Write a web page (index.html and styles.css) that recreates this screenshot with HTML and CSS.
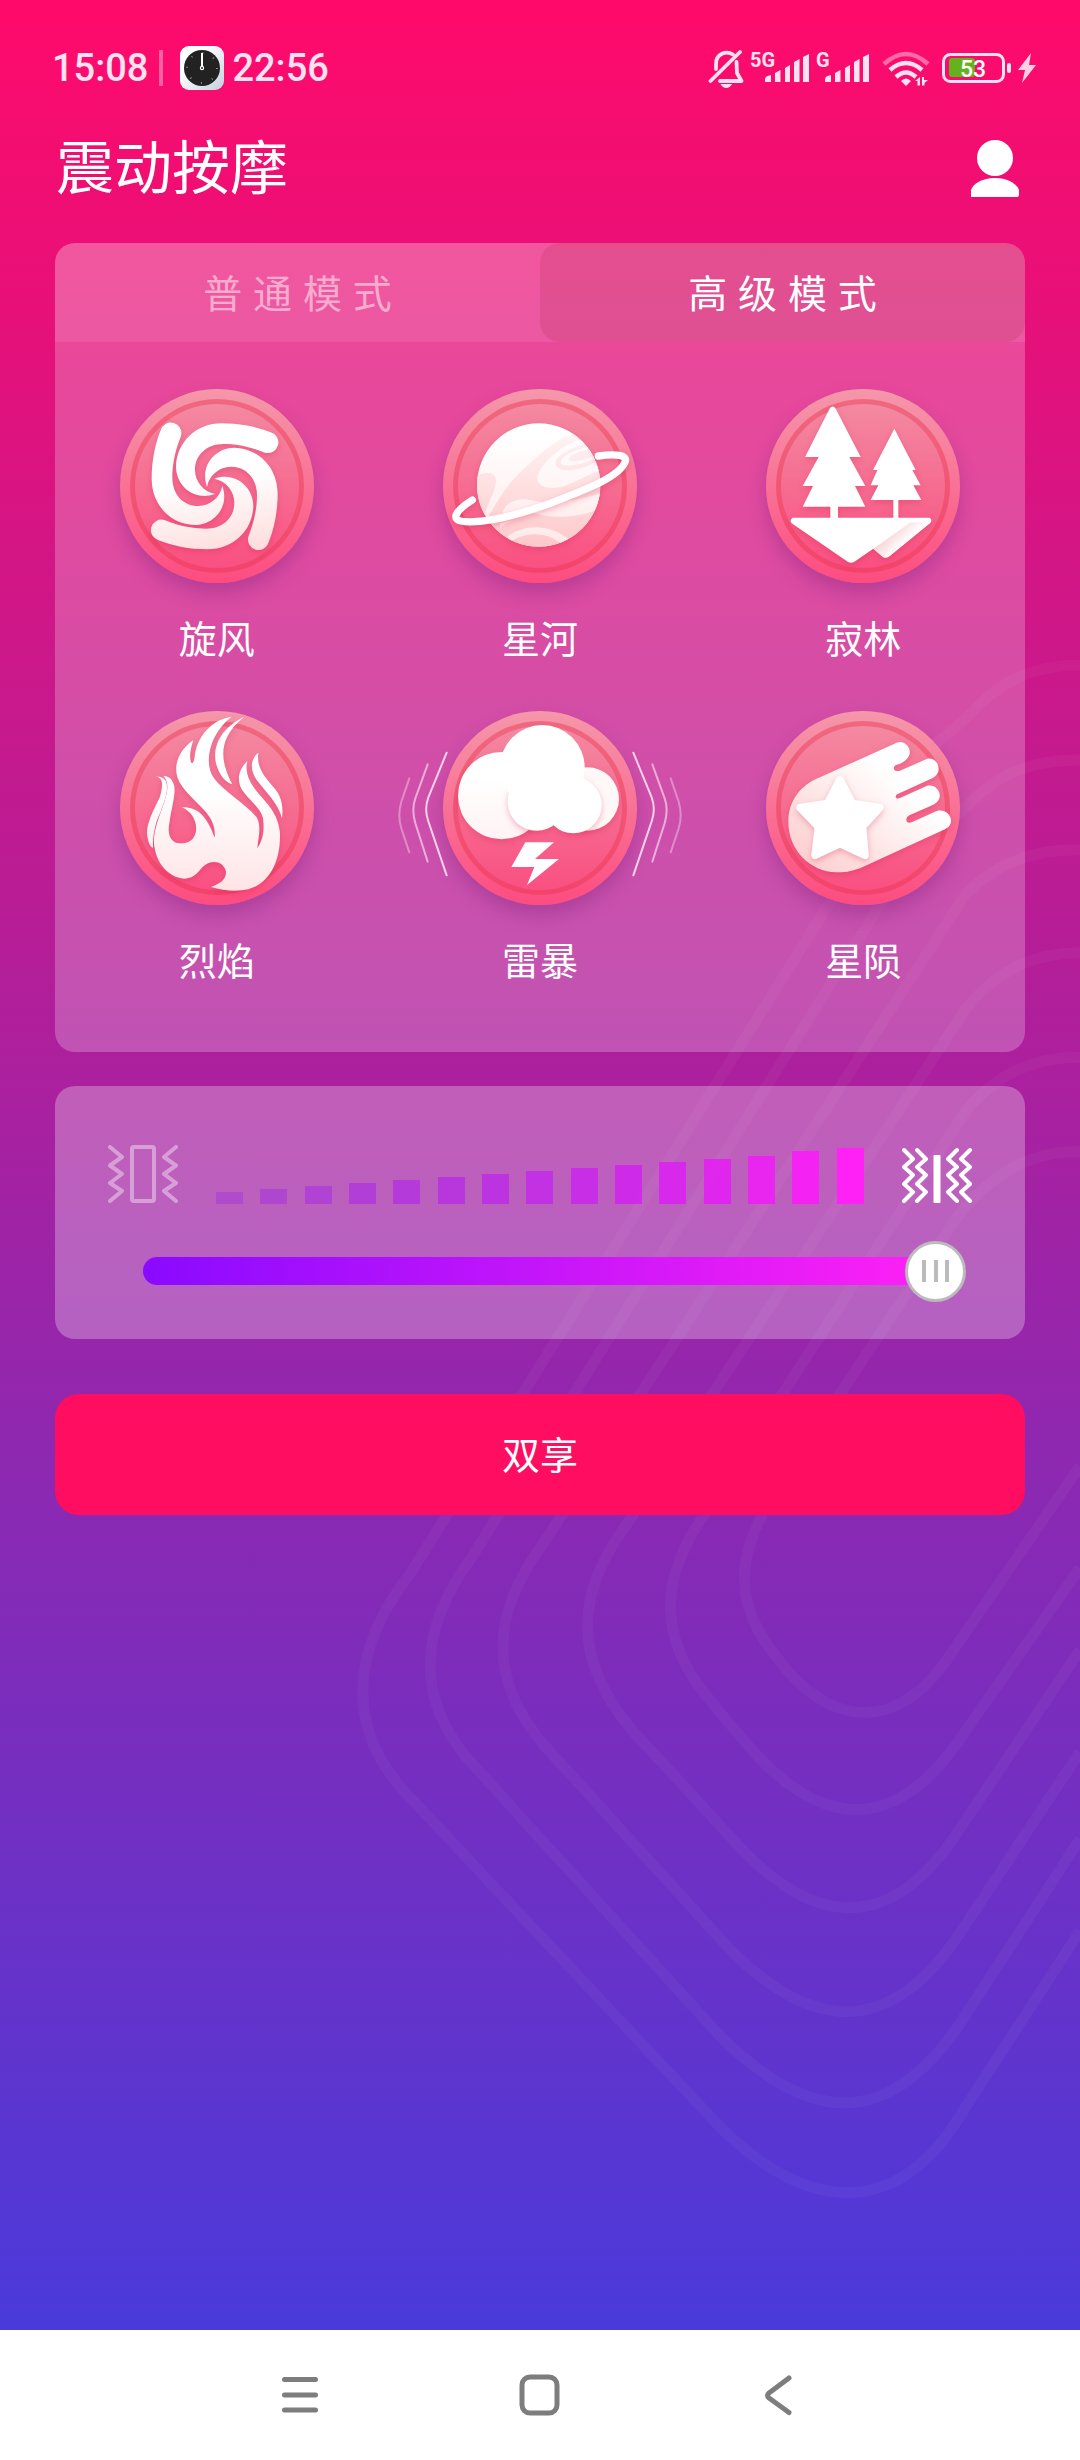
FILE: index.html
```html
<!DOCTYPE html>
<html lang="zh-CN">
<head>
<meta charset="utf-8">
<meta name="viewport" content="width=device-width, initial-scale=1">
<title>震动按摩</title>
<link rel="stylesheet" href="styles.css">
</head>
<body>
<div class="app">
  <svg class="backdrop" viewBox="0 0 1080 2330" preserveAspectRatio="xMaxYMax slice" aria-hidden="true">
    <path d="M1110 668Q1030 655 980 704Q950 735 925 750L410 1574C350 1650 346 1728 405 1792L720 2127C810 2215 900 2220 965 2108L1080 1931"/>
    <path d="M1110 763Q1025 750 975 798Q950 825 930 825L472 1557C418 1630 416 1696 467 1758L720 2036C810 2125 890 2132 965 2016L1080 1839"/>
    <path d="M1110 853Q1020 838 965 895L543 1544C490 1615 489 1680 543 1744L725 1944C810 2033 890 2040 962 1930L1080 1752"/>
    <path d="M1110 956Q1020 940 965 1010L627 1524C574 1595 573 1660 632 1730L738 1845C815 1928 890 1932 955 1836L1080 1650"/>
    <path d="M1110 1060Q1020 1045 965 1112L706 1512C658 1580 657 1640 713 1704L752 1750C822 1828 892 1832 955 1746L1080 1568"/>
    <path d="M1110 1156Q1020 1135 955 1220L770 1500C735 1560 735 1605 775 1655C825 1725 895 1738 950 1655L1080 1466"/>
  </svg>

  <div class="status">
    <span class="status-time">15:08</span>
    <span class="status-divider"></span>
    <svg class="status-clock" viewBox="0 0 44 44" aria-hidden="true">
      <defs><linearGradient id="clockFace" x1="0" y1="0" x2="1" y2="1"><stop offset=".3" stop-color="#fff"/><stop offset="1" stop-color="#c3cfdd"/></linearGradient></defs>
      <rect width="44" height="44" rx="9" fill="url(#clockFace)"/>
      <circle cx="22" cy="22" r="18" fill="#222"/>
      <circle cx="22" cy="22" r="15" fill="none" stroke="#888" stroke-width="2" stroke-dasharray="1 10.780"/>
      <path d="M22 7V20" stroke="#fff" stroke-width="2"/>
      <circle cx="22" cy="22" r="1.600" fill="none" stroke="#fff" stroke-width="1.200"/>
    </svg>
    <span class="status-time">22:56</span>
    <div class="status-icons">
      <svg width="36" height="44" viewBox="705 46 36 44" aria-hidden="true">
        <g fill="none" stroke="#ffe1ef" stroke-width="3.800" stroke-linecap="round" stroke-linejoin="round">
          <path d="M707.500 81L737 52"/>
          <path d="M730 54.500C723 50 713 54 713 64V69"/>
          <path d="M717 81H738.500L734 73L733.500 62"/>
        </g>
        <path d="M717.500 84H729Q727 88 723.300 88T717.500 84Z" fill="#ffe1ef"/>
      </svg>
      <svg width="60" height="44" viewBox="749 46 60 44" aria-label="5G 信号" role="img">
        <text x="749" y="67" class="net">5G</text>
        <path class="bars" d="M764 82v-3q0-3 6-4v7zM774 82v-9l5.500-3v12zM784 82V68l5-3v17zM793 82V62l5.500-3v23zM802 82V57l6-3v28z"/>
      </svg>
      <svg width="54" height="44" viewBox="815 46 54 44" aria-label="G 信号" role="img">
        <text x="815" y="67" class="net">G</text>
        <path class="bars" d="M824 82v-3q0-3 6-4v7zM834 82v-9l5.500-3v12zM844 82V68l5-3v17zM853 82V62l5.500-3v23zM862 82V57l6-3v28z"/>
      </svg>
      <svg class="wide-gap" width="48" height="44" viewBox="880 46 48 44" aria-hidden="true">
        <g fill="none" stroke="#ffe1ef" stroke-width="4.500">
          <path d="M882 64Q904 44 926 64" opacity=".45"/>
          <path d="M888 70Q904 56 920 70"/>
          <path d="M894 77Q904 68 914 77"/>
        </g>
        <path d="M899 81Q904 76 909 81L904 86Z" fill="#ffe1ef"/>
        <path d="M913 81L918 77V85.500H915.500V81ZM920 77H922V80H926L922.500 83V85.500H920Z" fill="#ffe1ef"/>
      </svg>
      <svg class="wide-gap" width="70" height="44" viewBox="942 46 70 44" aria-label="电量 53" role="img">
        <rect x="949" y="58" width="26" height="19" rx="3" fill="#66b21c"/>
        <rect x="943.500" y="54.500" width="60" height="27" rx="7" fill="none" stroke="#ffe1ef" stroke-width="3"/>
        <rect x="1007" y="63" width="4" height="10" rx="2" fill="#ffe1ef"/>
        <text x="960" y="77" class="charge">53</text>
      </svg>
      <svg width="18" height="44" viewBox="1018 46 18 44" aria-hidden="true">
        <path d="M1031 53L1018 70H1025L1022 83L1036 65H1029Z" fill="#ffd0e4"/>
      </svg>
    </div>
  </div>

  <header class="header">
    <h1 class="title">震动按摩</h1>
    <button class="profile" aria-label="个人中心">
      <svg width="50" height="57" viewBox="0 0 50 57" aria-hidden="true"><circle cx="25" cy="18" r="18" fill="#fff"/><path d="M1 57V50C3 44 12 38 25 38S47 44 49 50V55Q49 57 47 57Z" fill="#fff"/></svg>
    </button>
  </header>

  <main class="content">
    <section class="panel">
      <div class="tabs" role="tablist">
        <button class="tab" role="tab" aria-selected="false">普 通 模 式</button>
        <button class="tab tab-active" role="tab" aria-selected="true">高 级 模 式</button>
      </div>
      <div class="modes">
        <button class="mode">
          <span class="disc">
            <svg viewBox="120 57 582 582" aria-hidden="true">
              <defs>
                <linearGradient id="fade" gradientUnits="userSpaceOnUse" x1="380" y1="330" x2="420" y2="560"><stop stop-color="#fff"/><stop offset="1" stop-color="#fedcdc"/></linearGradient>
                <path id="arm" d="M405 372C340 395 288 345 288 290C290 215 350 160 425 160C480 160 530 170 572 187A30 30 0 0 1 555 248C500 226 460 222 430 222C380 222 345 255 345 300C345 335 370 365 405 372Z"/>
                <mask id="swirl" maskUnits="userSpaceOnUse" x="120" y="57" width="582" height="582"><g fill="#fff"><use href="#arm"/><use href="#arm" transform="rotate(90 404 349)"/><use href="#arm" transform="rotate(180 404 349)"/><use href="#arm" transform="rotate(270 404 349)"/></g></mask>
              </defs>
              <g class="glyph"><rect x="120" y="57" width="582" height="582" fill="url(#fade)" mask="url(#swirl)"/></g>
            </svg>
          </span>
          <span class="mode-name">旋风</span>
        </button>
        <button class="mode">
          <span class="disc">
            <svg viewBox="129 57 582 582" aria-hidden="true">
              <defs>
                <linearGradient id="planetPink" gradientUnits="userSpaceOnUse" x1="400" y1="190" x2="400" y2="520"><stop stop-color="#fff4f4"/><stop offset="1" stop-color="#fdc9cb"/></linearGradient>
                <linearGradient id="planetPale" gradientUnits="userSpaceOnUse" x1="400" y1="200" x2="400" y2="520"><stop stop-color="#fff"/><stop offset="1" stop-color="#ffe9e9"/></linearGradient>
                <clipPath id="planetClip"><circle cx="416" cy="345" r="185"/></clipPath>
              </defs>
              <circle class="glyph" cx="416" cy="345" r="185" fill="url(#planetPale)"/>
              <g clip-path="url(#planetClip)">
                <path fill="url(#planetPink)" d="M530 192C460 205 415 260 370 298C320 345 300 380 265 440L300 530H560L610 370V260L560 205Z"/>
                <path fill="url(#planetPink)" d="M225 320C260 300 290 305 288 335C285 370 265 390 252 440L225 400Z"/>
                <path fill="url(#planetPale)" d="M550 205C490 220 415 285 412 325C412 360 470 358 500 345C550 325 580 305 610 300L590 272C550 300 490 310 470 290C450 265 510 232 565 218Z"/>
                <path fill="url(#planetPale)" d="M565 230C520 240 480 260 482 280C500 300 560 275 602 262Z"/>
                <path fill="url(#planetPink)" d="M570 236C530 245 505 258 506 270C518 280 560 266 600 254Z"/>
                <path fill="url(#planetPale)" d="M308 425C325 385 370 383 400 392C460 405 530 392 610 368V410C560 440 460 450 405 430C350 425 310 440 308 425Z"/>
                <path fill="url(#planetPale)" d="M300 460L345 450Q310 460 300 478ZM318 503C370 460 450 460 510 510L485 522C440 485 380 485 335 512Z"/>
              </g>
              <path class="glyph" d="M595 258C650 250 682 256 676 274C660 320 560 358 450 400C340 440 250 458 195 455C150 452 162 425 217 390" fill="none" stroke="#fff" stroke-width="22" stroke-linecap="round"/>
            </svg>
          </span>
          <span class="mode-name">星河</span>
        </button>
        <button class="mode">
          <span class="disc">
            <svg viewBox="138 57 582 582" aria-hidden="true">
              <defs><linearGradient id="fold" gradientUnits="userSpaceOnUse" x1="505" y1="490" x2="545" y2="530"><stop stop-color="#f8d3d6"/><stop offset="1" stop-color="#fff"/></linearGradient></defs>
              <g class="glyph" fill="#fff">
                <path d="M330 114Q338 105 346 114L422 261H388L436 348H405L436 410H354V445H331V410H248L279 348H248L296 261H255Z"/>
                <path d="M523 176L587 300H577L602 346H580L604 390H535V445H520V390H452L475 346H452L472 300H459Z"/>
                <path d="M218 443H629Q638 450 631 458L508 559Q498 566 488 560L460 536L402 576Q393 581 384 576L215 460Q208 450 218 443Z"/>
              </g>
              <path d="M572 457L460 536L488 560Q498 566 508 559L631 458Z" fill="url(#fold)"/>
            </svg>
          </span>
          <span class="mode-name">寂林</span>
        </button>
        <button class="mode">
          <span class="disc">
            <svg viewBox="120 63 582 582" aria-hidden="true">
              <defs><linearGradient id="flame" gradientUnits="userSpaceOnUse" x1="400" y1="300" x2="400" y2="600"><stop stop-color="#fff"/><stop offset="1" stop-color="#fee4e6"/></linearGradient></defs>
              <g class="glyph" fill="url(#flame)">
                <path d="M455 80C395 88 350 140 344 200C342 215 337 224 333 217C327 200 332 175 340 150C300 178 280 220 292 262C305 300 345 330 372 360C395 385 407 410 404 443C380 375 350 350 305 352C340 365 355 405 346 432C338 455 320 460 300 460C270 460 262 430 268 400C275 350 290 305 281 282C275 263 264 259 250 257C270 280 262 310 250 345C230 400 215 440 225 480C235 530 275 565 315 566C345 564 355 545 367 532C390 508 430 510 438 545C438 570 420 580 393 591C430 602 470 606 505 598C565 580 602 520 600 430C595 370 560 340 535 310C510 280 493 250 502 213C475 240 470 270 485 298C505 330 540 350 549 385C555 430 545 455 532 475C535 440 545 410 530 382C490 335 430 305 400 262C370 215 390 130 455 80Z"/>
                <path d="M493 80C440 105 400 150 406 210C412 245 430 275 457 283C425 220 405 150 493 80Z"/>
                <path d="M228 260C250 262 250 285 240 320C220 360 200 400 201 430C203 455 210 470 219 474C218 440 225 400 240 370C255 330 267 300 258 275C250 260 240 260 228 260Z"/>
                <path d="M535 188C510 208 510 240 530 270C560 310 595 340 606 385C612 340 600 310 575 285C545 250 530 225 535 188Z"/>
              </g>
            </svg>
          </span>
          <span class="mode-name">烈焰</span>
        </button>
        <button class="mode" aria-pressed="true">
          <span class="disc">
            <svg viewBox="189 63 582 582" aria-hidden="true">
              <defs><linearGradient id="cloudSide" x1="0" y1="0" x2="0" y2="1"><stop offset=".3" stop-color="#fff"/><stop offset="1" stop-color="#fff3f4"/></linearGradient></defs>
              <g id="waves" fill="none" stroke="#fff" stroke-width="6" stroke-linecap="round">
                <path d="M200 188L145 322Q132 358 145 394L200 556" opacity=".75"/>
                <path d="M143 223L106 325Q94 358 106 400L143 515" opacity=".55"/>
                <path d="M88 265L64 335Q52 375 64 415L88 487" opacity=".35"/>
              </g>
              <use href="#waves" transform="translate(960 0) scale(-1 1)"/>
              <g class="glyph">
                <circle cx="365" cy="317" r="131" fill="url(#cloudSide)"/>
                <circle cx="622" cy="327" r="95" fill="#fff8f8"/>
              </g>
              <g class="glyph" fill="#fff">
                <circle cx="470" cy="335" r="87"/><circle cx="580" cy="345" r="85"/>
              </g>
              <circle cx="487" cy="232" r="127" fill="#fff"/>
              <path d="M436 457H522L465 507H537L441 585L463 531H394Z" fill="#fff"/>
            </svg>
          </span>
          <span class="mode-name">雷暴</span>
        </button>
        <button class="mode">
          <span class="disc">
            <svg viewBox="138 63 582 582" aria-hidden="true">
              <defs><linearGradient id="tail" gradientUnits="userSpaceOnUse" x1="260" y1="520" x2="500" y2="240"><stop stop-color="#fdd0d0"/><stop offset="1" stop-color="#fff"/></linearGradient></defs>
              <path class="glyph" fill="url(#tail)" d="M300 262L530 158C555 148 575 175 568 195C560 215 540 222 528 225C515 232 522 248 540 242L620 207C645 200 660 225 655 245C650 258 640 264 625 270L535 311C522 316 526 330 540 324L620 288C645 280 665 305 658 325C655 338 640 344 630 349L568 376C553 384 558 404 575 397L650 363C675 356 695 375 693 395C690 410 680 415 670 420L430 530C400 543 375 548 350 547C270 545 205 480 205 395C205 335 240 285 300 262Z"/>
              <path class="glyph" d="M360 270L397 341L479 353L427 410L434 495L360 460L286 495L296 410L241 353L323 341Z" fill="#fff" stroke="#fff" stroke-width="24" stroke-linejoin="round"/>
            </svg>
          </span>
          <span class="mode-name">星陨</span>
        </button>
      </div>
    </section>

    <section class="strength">
      <div class="levels">
        <svg class="weak" width="70" height="60" viewBox="108 1144 70 60" aria-hidden="true">
          <g fill="none" stroke="#fff" stroke-width="4" stroke-linecap="round" stroke-linejoin="round">
            <rect x="132" y="1147" width="22" height="54" rx="2"/>
            <path d="M110 1147L122 1157L110 1165.500L122 1174L110 1183L122 1191L110 1201M176 1147L164 1157L176 1165.500L164 1174L176 1183L164 1191L176 1201"/>
          </g>
        </svg>
        <div class="bars-row" aria-hidden="true">
          <i style="--n:0"></i><i style="--n:1"></i><i style="--n:2"></i><i style="--n:3"></i><i style="--n:4"></i><i style="--n:5"></i><i style="--n:6"></i><i style="--n:7"></i><i style="--n:8"></i><i style="--n:9"></i><i style="--n:10"></i><i style="--n:11"></i><i style="--n:12"></i><i style="--n:13"></i><i style="--n:14"></i>
        </div>
        <svg width="70" height="60" viewBox="902 1144 70 60" aria-hidden="true">
          <g id="zig" fill="none" stroke="#fff" stroke-width="4" stroke-linecap="round" stroke-linejoin="round">
            <path d="M904 1150L913 1159L904 1167L913 1175L904 1184L913 1192L904 1201M917 1150L926 1159L917 1167L926 1175L917 1184L926 1192L917 1201"/>
          </g>
          <use href="#zig" transform="translate(1874 0) scale(-1 1)"/>
          <rect x="933.500" y="1155" width="7" height="48" rx="1" fill="#fff"/>
        </svg>
      </div>
      <input class="slider" type="range" min="0" max="100" value="100" aria-label="震动强度">
    </section>

    <button class="share">双享</button>
  </main>
</div>

<nav class="navbar" aria-label="系统导航">
  <button aria-label="最近任务"><svg width="44" height="44" viewBox="0 0 44 44"><path d="M6.500 6.500H37.500M6.500 22H37.500M6.500 37H37.500"/></svg></button>
  <button aria-label="主屏幕"><svg width="44" height="44" viewBox="0 0 44 44"><rect x="4" y="4" width="35" height="36" rx="8"/></svg></button>
  <button aria-label="返回"><svg width="44" height="44" viewBox="0 0 44 44"><path d="M31 5L11 20Q8 22.500 11 25L31 39.500"/></svg></button>
</nav>
</body>
</html>
```
FILE: styles.css
```css
* {
  box-sizing: border-box;
}

body {
  margin: 0;
  min-height: 100vh;
  display: flex;
  flex-direction: column;
  font-family: "Noto Sans CJK SC", "Noto Sans", sans-serif;
  color: #fff;
}

button {
  margin: 0;
  padding: 0;
  border: 0;
  background: none;
  color: inherit;
  font: inherit;
}

svg {
  display: block;
}

.app {
  position: relative;
  flex: 1;
  overflow: hidden;
  background: linear-gradient(#ff0a6a, #4a3adb);
}

.backdrop {
  position: absolute;
  inset: 0;
  width: 100%;
  height: 100%;
  fill: none;
  stroke: rgba(255, 255, 255, 0.035);
  stroke-width: 11;
}

.status,
.header,
.content {
  position: relative;
}

/* system status bar */
.status {
  display: flex;
  align-items: center;
  padding: 46px 44px 0 52px;
}

.status-time {
  font-family: Roboto, sans-serif;
  font-weight: 500;
  font-size: 38px;
  line-height: 44px;
  color: #ffe1ef;
}

.status-divider {
  width: 4px;
  height: 36px;
  margin: 0 17px 0 11px;
  background: rgba(255, 255, 255, 0.35);
}

.status-clock {
  width: 44px;
  height: 44px;
  margin-right: 8px;
}

.status-icons {
  display: flex;
  gap: 6px;
  margin-left: auto;
}

.status-icons .wide-gap {
  margin-left: 6px;
}

.net {
  font: 700 20px Roboto, sans-serif;
  fill: #ffe1ef;
}

.bars {
  fill: #ffe1ef;
}

.charge {
  font: 500 23px Roboto, sans-serif;
  fill: #fff;
}

/* title row */
.header {
  display: flex;
  align-items: center;
  justify-content: space-between;
  padding: 34px 60px 31px 56px;
}

.title {
  margin: 0;
  padding-bottom: 8px;
  font-weight: 400;
  font-size: 58px;
  line-height: 80px;
}

.content {
  padding: 0 55px;
}

/* mode panel */
.panel {
  overflow: hidden;
  border-radius: 20px;
  background: rgba(255, 255, 255, 0.23);
}

.tabs {
  display: grid;
  grid-template-columns: 1fr 1fr;
  background: rgba(255, 255, 255, 0.09);
}

.tab {
  height: 99px;
  padding-bottom: 4px;
  border-radius: 20px;
  font-family: "Liberation Sans", "Noto Sans CJK SC", sans-serif;
  font-size: 39px;
  color: rgba(255, 255, 255, 0.5);
}

.tab-active {
  background: rgba(100, 0, 0, 0.09);
  color: #fff;
}

.modes {
  display: grid;
  grid-template-columns: repeat(3, 1fr);
  row-gap: 46px;
  padding: 47px 0 65px;
}

.mode {
  display: flex;
  flex-direction: column;
  align-items: center;
  gap: 26px;
}

.disc {
  position: relative;
  width: 194px;
  height: 194px;
  border-radius: 50%;
  background: linear-gradient(#f597aa, #fd4c80);
  box-shadow: 0 10px 18px rgba(130, 40, 130, 0.4);
}

.disc::before {
  content: "";
  position: absolute;
  inset: 10px;
  border: 5px solid rgba(236, 50, 75, 0.4);
  border-radius: 50%;
  background: rgba(225, 70, 120, 0.1);
}

.disc svg {
  position: relative;
  width: 100%;
  height: 100%;
  overflow: visible;
}

.glyph {
  filter: drop-shadow(0 8px 10px rgba(215, 30, 75, 0.3));
}

.mode-name,
.share {
  font-size: 38px;
  line-height: 56px;
}

/* strength control */
.strength {
  margin-top: 34px;
  padding: 58px 53px 38px;
  border-radius: 20px;
  background: rgba(255, 255, 255, 0.28);
}

.levels {
  display: flex;
  align-items: flex-end;
  justify-content: space-between;
}

.weak {
  opacity: 0.4;
}

.bars-row {
  flex: 1;
  display: flex;
  align-items: flex-end;
  justify-content: space-between;
  margin: 0 38px;
}

.bars-row i {
  width: 27px;
  height: calc(12px + 3px * var(--n));
  background: color-mix(in srgb, #ff21f5 calc(var(--n) * 100% / 14), #8a0aff);
  opacity: calc(0.25 + 0.75 * var(--n) / 14);
}

.bars-row i:nth-last-child(-n + 2) {
  height: calc(14px + 3px * var(--n));
}

.slider {
  display: block;
  width: calc(100% - 41px);
  height: 61px;
  margin: 36px 6px 0 35px;
  appearance: none;
  background: none;
}

.slider::-webkit-slider-runnable-track {
  height: 28px;
  border-radius: 14px;
  background: linear-gradient(90deg, #8a0aff, #ff21f5) left / calc(100% - 30px) 100% no-repeat;
}

.slider::-webkit-slider-thumb {
  appearance: none;
  width: 61px;
  height: 61px;
  margin-top: -16px;
  border: 3px solid #bbb;
  border-radius: 50%;
  background:
    linear-gradient(#bbb, #bbb) 14px center / 4px 22px no-repeat,
    linear-gradient(#bbb, #bbb) center / 4px 22px no-repeat,
    linear-gradient(#bbb, #bbb) 37px center / 4px 22px no-repeat,
    #fff;
}

.share {
  display: block;
  width: 100%;
  height: 121px;
  margin: 55px 0 60px;
  padding-bottom: 4px;
  border-radius: 24px;
  background: #ff0d60;
}

/* system navigation */
.navbar {
  display: flex;
  justify-content: center;
  gap: 196px;
  height: 130px;
  background: #fff;
}

.navbar svg {
  fill: none;
  stroke: #7d7d7d;
  stroke-width: 5;
  stroke-linecap: round;
  stroke-linejoin: round;
}
```
